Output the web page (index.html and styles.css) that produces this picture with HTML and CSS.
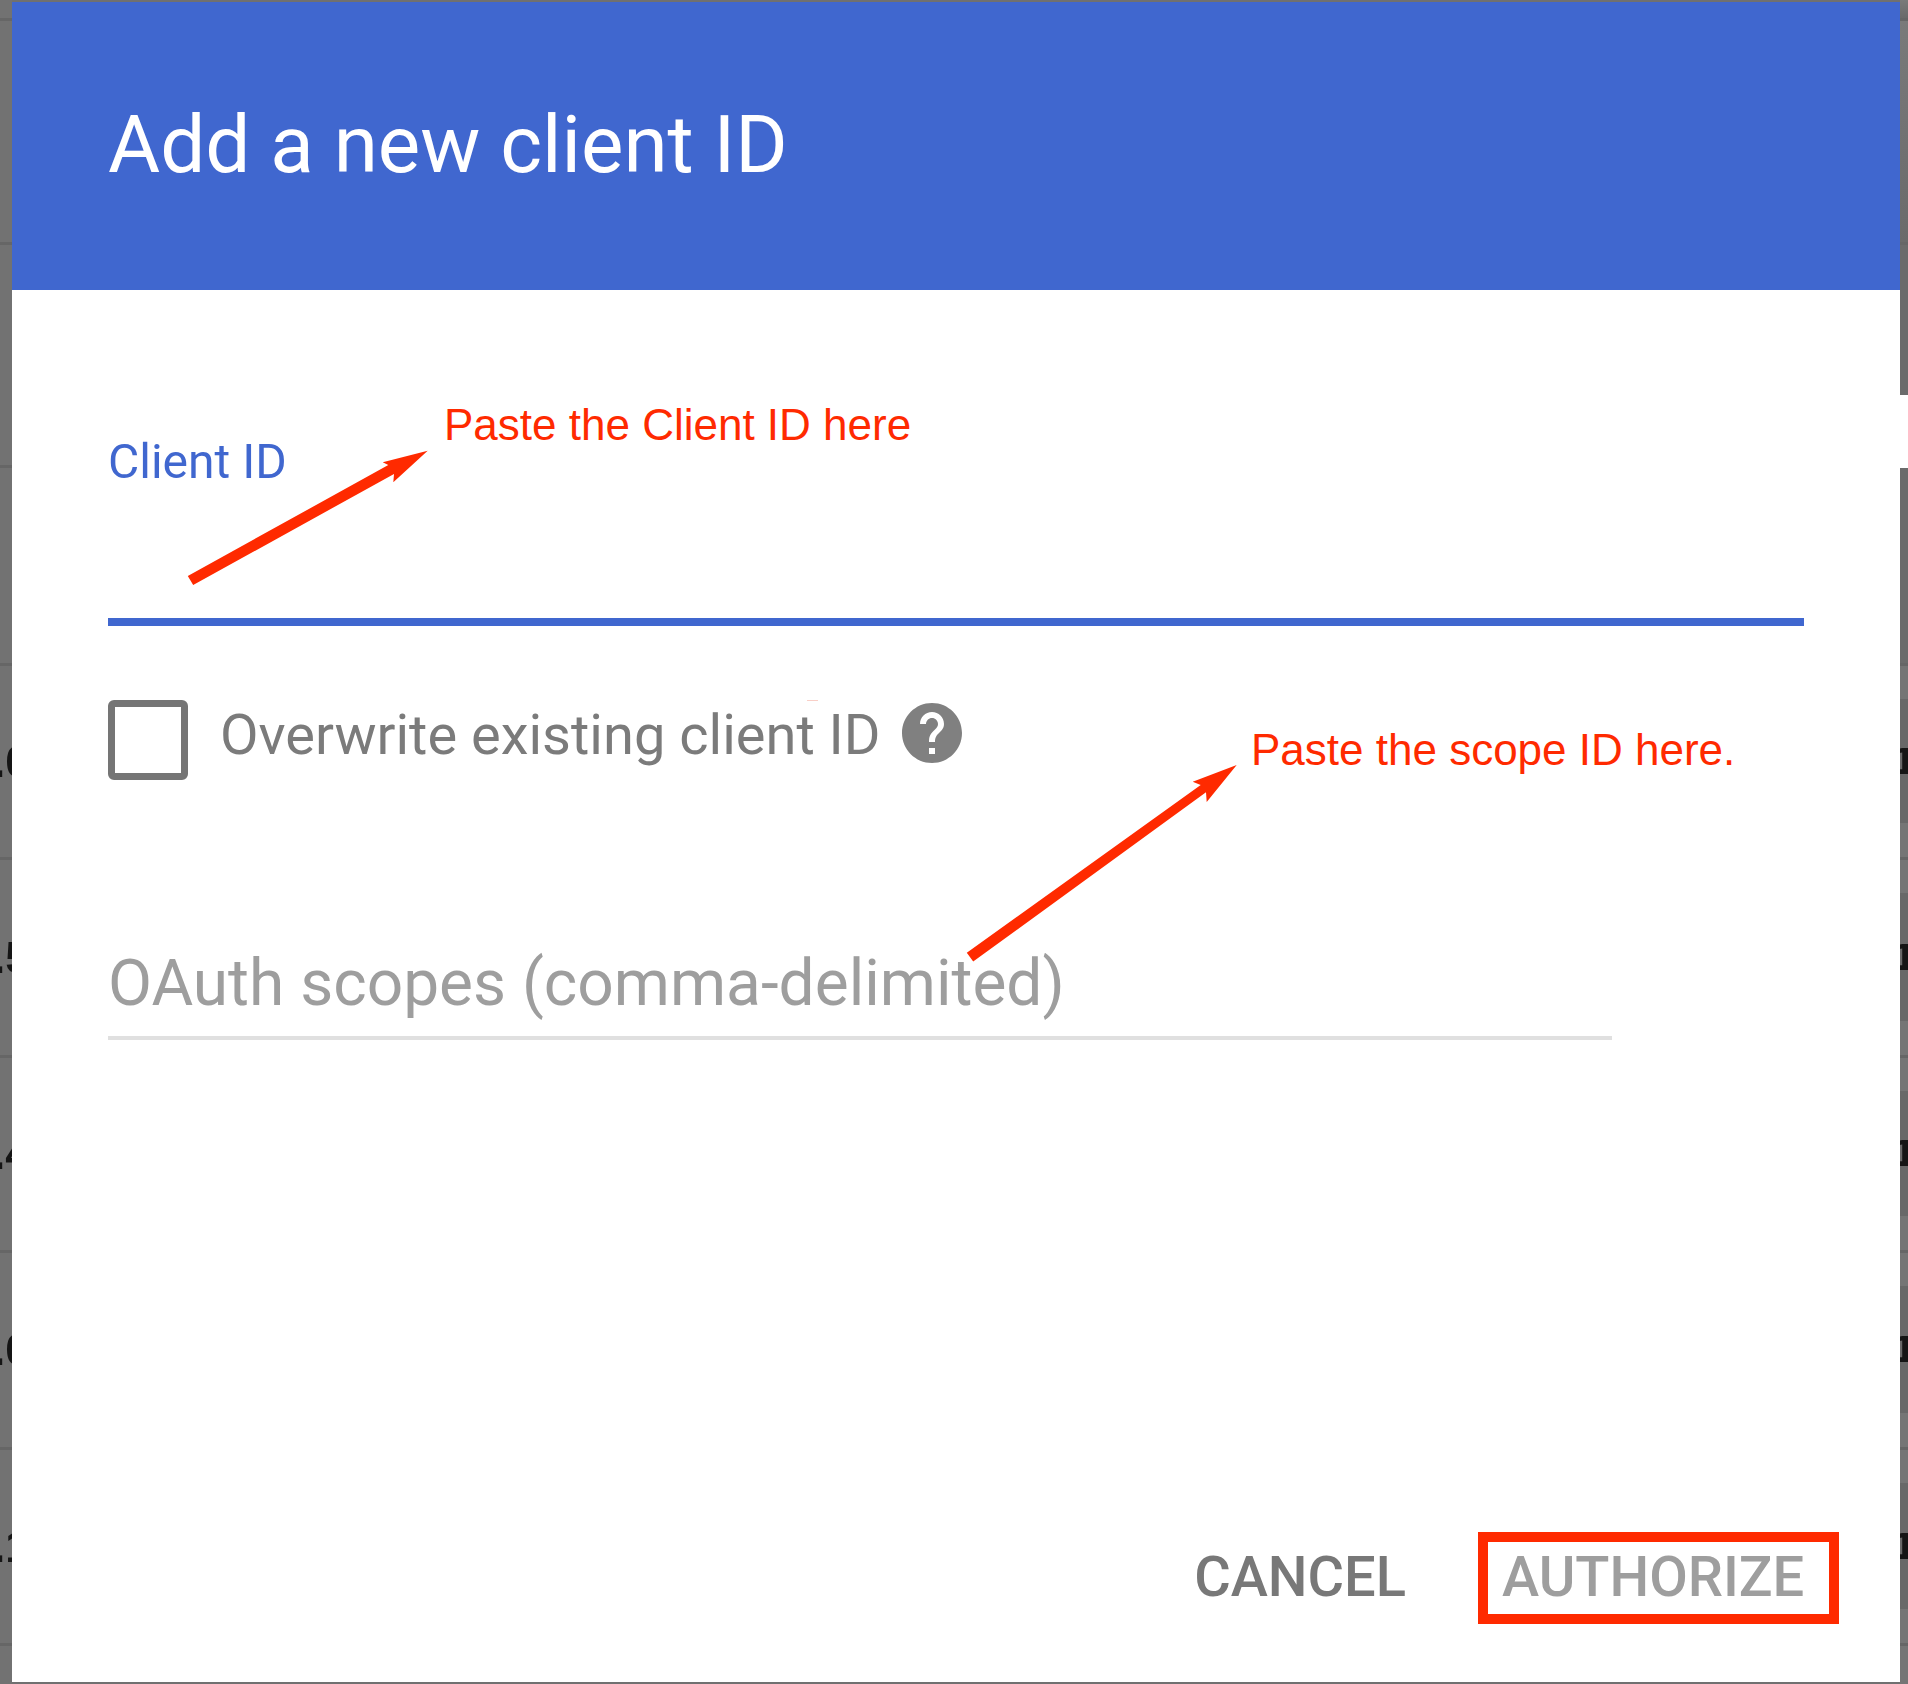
FILE: index.html
```html
<!DOCTYPE html>
<html lang="en">
<head>
<meta charset="utf-8">
<title>Add a new client ID</title>
<link rel="stylesheet" href="styles.css">
</head>
<body>
<div class="backdrop">
  <div class="row row-a"><span class="edge-l"></span><span class="edge-r edge-top"></span></div>
  <div class="row row-b"><span class="edge-l"></span><span class="edge-r edge-top"></span></div>
  <div class="row row-c"><span class="edge-l"></span><span class="edge-r"></span></div>
  <div class="row row-d"><span class="edge-l"></span><span class="edge-r"></span></div>
  <div class="row row-e"><span class="edge-l"><b class="num">.0</b></span><span class="edge-r banded"><b class="one">1</b></span></div>
  <div class="row row-f"><span class="edge-l"><b class="num">.5</b></span><span class="edge-r banded"><b class="one">1</b></span></div>
  <div class="row row-g"><span class="edge-l"><b class="num">.4</b></span><span class="edge-r banded"><b class="one">1</b></span></div>
  <div class="row row-h"><span class="edge-l"><b class="num">.0</b></span><span class="edge-r banded"><b class="one">1</b></span></div>
  <div class="row row-i"><span class="edge-l"><b class="num">.1</b></span><span class="edge-r banded"><b class="one">1</b></span></div>
  <div class="row row-j"><span class="edge-l"></span><span class="edge-r banded"></span></div>
</div>
<div class="notch"></div>

<main class="dialog">
  <header class="dialog-head"><h1 class="dialog-title soft">Add a new client ID</h1></header>
  <div class="dialog-body">
    <div class="field-active"><label class="field-label soft">Client ID</label></div>
    <div class="check-row">
      <span class="checkbox"></span>
      <span class="check-text soft">Overwrite existing client ID</span>
      <svg class="help soft" viewBox="0 0 24 24"><path d="M12 2C6.48 2 2 6.48 2 12s4.48 10 10 10 10-4.48 10-10S17.52 2 12 2zm1 17h-2v-2h2v2zm2.07-7.75l-.9.92C13.45 12.9 13 13.5 13 15h-2v-.5c0-1.1.45-2.1 1.17-2.83l1.24-1.26c.37-.36.59-.86.59-1.41 0-1.1-.9-2-2-2s-2 .9-2 2H8c0-2.21 1.79-4 4-4s4 1.79 4 4c0 .88-.36 1.68-.93 2.25z"/></svg>
    </div>
    <div class="field-idle"><span class="soft idle-text">OAuth scopes (comma-delimited)</span></div>
  </div>
  <footer class="dialog-foot">
    <button class="btn btn-cancel"><span class="soft btn-text">CANCEL</span></button>
    <button class="btn btn-auth"><span class="soft btn-text">AUTHORIZE</span></button>
  </footer>
</main>

<svg class="arrows" viewBox="0 0 1908 1684">
  <polygon class="arrow" points="187.8,576 388.3,465 382.7,462.3 427.7,450.7 393.3,482.3 394,474 193.2,585"/>
  <polygon class="arrow" points="966.8,952.8 1200.7,785 1192.7,781.7 1236.7,765 1206.7,802 1206,792.3 973.2,961.6"/>
</svg>
<span class="note note-client">Paste the Client ID here</span>
<span class="note note-scope">Paste the scope ID here.</span>
<span class="speck"></span>
</body>
</html>
```
FILE: styles.css
```css
* { box-sizing: border-box; }
html, body { margin: 0; padding: 0; }
body {
  width: 1908px;
  height: 1684px;
  position: relative;
  overflow: hidden;
  background: #707070;
  font-family: Roboto, "Noto Sans", sans-serif;
}

/* the reference is an enlarged capture, so its text is slightly soft */
.soft { filter: blur(0.5px); }

/* dimmed page behind the dialog */
.backdrop {
  display: flex;
  flex-direction: column;
  height: 1684px;
  filter: blur(0.6px);
}
.row { display: flex; justify-content: space-between; flex: none; border-top: 3px solid #666666; }
.row-a { height: 18px; border-top: 0; }
.row-b { height: 224px; }
.row-c { height: 223px; }
.row-d { height: 198px; }
.row-e { height: 194px; }
.row-f { height: 198px; }
.row-g { height: 195px; }
.row-h { height: 197px; }
.row-i { height: 196px; }
.row-j { height: 41px; }
.edge-l {
  width: 12px;
  background: #727272;
  display: flex;
  align-items: center;
  white-space: nowrap;
}
.edge-r {
  width: 8px;
  background: #6b6b6b;
  display: flex;
  align-items: center;
  overflow: hidden;
  position: relative;
}
.edge-top { background: linear-gradient(#7a7a7a, #6a6a6a); }
.banded {
  background: linear-gradient(#757575 0, #757575 33px, #686868 33px, #686868 calc(100% - 34px), #757575 calc(100% - 34px));
}
.num {
  font: 700 44px/1 "Liberation Sans", sans-serif;
  color: #151515;
  margin-left: -7px;
}
.one {
  font: 700 36px/1 "DejaVu Sans", sans-serif;
  color: #151515;
  margin-left: -8px;
}
.notch {
  position: absolute;
  top: 395px;
  right: 0;
  width: 8px;
  height: 73px;
  background: #ffffff;
}

/* dialog */
.dialog {
  position: absolute;
  left: 12px;
  top: 2px;
  width: 1888px;
  height: 1680px;
  background: #ffffff;
  display: flex;
  flex-direction: column;
}
.dialog-head {
  height: 288px;
  flex: none;
  background: #4067cf;
  padding: 0 0 2px 96px;
  display: flex;
  align-items: center;
}
.dialog-title {
  margin: 0;
  color: #ffffff;
  font-size: 80px;
  font-weight: 400;
  line-height: 1;
}
.dialog-body {
  flex: 1;
  padding: 0 96px;
  display: flex;
  flex-direction: column;
}
.field-active {
  margin-top: 144px;
  height: 192px;
  border-bottom: 8px solid #4067cf;
}
.field-label {
  display: block;
  color: #4067cf;
  font-size: 48px;
  line-height: 56px;
}
.check-row {
  margin-top: 74px;
  display: flex;
  align-items: center;
  height: 80px;
}
.checkbox {
  width: 80px;
  height: 80px;
  flex: none;
  border: 7px solid #757575;
  border-radius: 6px;
}
.check-text {
  margin-left: 32px;
  color: #7b7b7b;
  font-size: 56px;
  line-height: 64px;
  margin-top: -10px;
}
.help {
  width: 72px;
  height: 72px;
  margin: -14px 0 0 15px;
  fill: #808080;
}
.field-idle {
  margin-top: 168px;
  width: 1504px;
  height: 92px;
  border-bottom: 4px solid #e0e0e0;
  color: #9e9e9e;
  font-size: 64px;
  line-height: 72px;
  white-space: nowrap;
}
.idle-text { display: block; }
.dialog-foot {
  display: flex;
  justify-content: flex-end;
  align-items: center;
  gap: 72px;
  padding: 0 61px 58px 0;
}
.btn {
  font-family: inherit;
  font-size: 56px;
  font-weight: 500;
  line-height: 71px;
  background: none;
  border: 0;
  padding: 0;
}
.btn-text { display: block; margin-top: -2px; }
.btn-cancel { color: #787878; }
.btn-auth {
  color: #9e9e9e;
  border: 10px solid #ff2a00;
  height: 92px;
  width: 361px;
  text-align: left;
  padding-left: 14px;
}

/* annotations pasted over the screenshot */
.arrows { position: absolute; left: 0; top: 0; width: 1908px; height: 1684px; pointer-events: none; }
.arrow { fill: #ff2a00; }
.note {
  position: absolute;
  color: #ff2a00;
  font-family: "Liberation Sans", Arial, sans-serif;
  font-size: 44px;
  line-height: 50px;
  white-space: nowrap;
}
.note-client { left: 444px; top: 400px; }
.note-scope { left: 1251px; top: 725px; }
.speck { position: absolute; left: 807px; top: 700px; width: 11px; height: 1px; background: #f9cfc7; }
```
